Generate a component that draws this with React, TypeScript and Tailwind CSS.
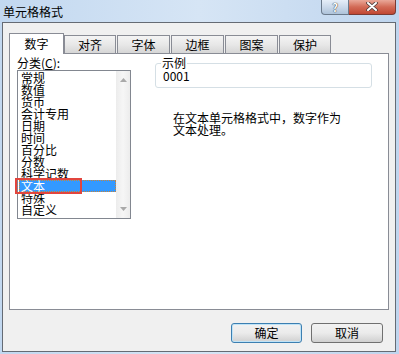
export default function App() {
  const items = ["常规", "数值", "货币", "会计专用", "日期", "时间", "百分比", "分数", "科学记数", "文本", "特殊", "自定义"];
  const tabs: { label: string; w: string }[] = [
    { label: "对齐", w: "w-[52px]" },
    { label: "字体", w: "w-[53px]" },
    { label: "边框", w: "w-[53px]" },
    { label: "图案", w: "w-[53px]" },
    { label: "保护", w: "w-[52px]" },
  ];
  return (
    <div className="w-[399px] h-[354px] flex flex-col bg-gradient-to-r from-[#c2d8f0] via-[#d6e5f5] to-[#bfd5ee] text-[12px] leading-[12px] text-black font-['Noto_Sans_CJK_SC',sans-serif]">
      {/* Title bar */}
      <div className="h-[22px] flex justify-between">
        <span className="pl-[3px] pt-[6px]">单元格格式</span>
        <div className="flex mr-[3px] h-[15px]">
          <div className="w-[28px] h-[15px] border border-t-0 border-[#6b7a8c] rounded-bl-[4px] bg-gradient-to-b from-[#e6eef8] via-[#cbd9ea] to-[#aec3da] flex items-center justify-center">
            <span className="text-[11px] leading-[11px] font-bold text-white [text-shadow:0_0_1px_#333,0_0_1px_#333]">?</span>
          </div>
          <div className="w-[47px] h-[15px] border border-t-0 border-l-0 border-[#7a3a33] rounded-br-[4px] bg-gradient-to-b from-[#e9a899] via-[#d26a56] to-[#c04632] flex items-start justify-center pt-[2px]">
            <svg width="12" height="9" viewBox="0 0 12 9">
              <path d="M2 1 L10 8 M10 1 L2 8" stroke="#4a3a3a" strokeWidth="3.6" strokeLinecap="round" />
              <path d="M2 1 L10 8 M10 1 L2 8" stroke="#ffffff" strokeWidth="2" strokeLinecap="round" />
            </svg>
          </div>
        </div>
      </div>

      {/* Client area */}
      <div className="ml-[2px] mr-[3px] h-[330px] border border-[#656b74] bg-[#f0f0f0] flex flex-col pt-[10px]">
        {/* Tabs */}
        <div className="relative z-10 -mb-[1px] h-[21px] flex items-end pl-[6px]">
          <div className="w-[55px] h-[21px] border border-b-0 border-[#898c95] bg-white flex items-center justify-center">
            数字
          </div>
          {tabs.map((t, i) => (
            <div
              key={t.label}
              className={`${t.w} h-[18px] mb-[1px] ${i === 0 ? "" : "ml-[1px]"} border border-b-0 border-[#898c95] bg-gradient-to-b from-[#f4f4f4] via-[#e8e8e8] to-[#d6d6d6] flex items-center justify-center pt-[1px]`}
            >
              {t.label}
            </div>
          ))}
        </div>

        {/* Panel */}
        <div className="ml-[6px] w-[380px] h-[257px] border border-[#898c95] bg-white flex pl-[7px] pt-[3px]">
          {/* Left column */}
          <div className="w-[114px] flex flex-col">
            <div className="h-[12px] whitespace-nowrap">
              分类(<span className="underline">C</span>):
            </div>
            <div className="mt-[1px] h-[149px] border border-[#828790] flex">
              <div className="w-[98px] pt-[1px] flex flex-col">
                {items.map((it) =>
                  it === "文本" ? (
                    <div
                      key={it}
                      className="relative ml-[1px] w-[97px] h-[12px] pl-[1px] bg-[#3399ff] text-white border border-dotted border-[#c8843a] leading-[10px]"
                    >
                      {it}
                      <div className="absolute left-[-5px] top-[-3px] w-[67px] h-[16px] border-[2px] border-[#e2453d]" />
                    </div>
                  ) : (
                    <div key={it} className="ml-[1px] w-[97px] h-[12px] pl-[2px] whitespace-nowrap">
                      {it}
                    </div>
                  )
                )}
              </div>
              <div className="w-[14px] bg-gradient-to-r from-[#ececec] via-[#f6f6f6] to-[#ececec] flex flex-col justify-between items-center pt-[7px] pb-[7px]">
                <svg width="7" height="4" viewBox="0 0 7 4">
                  <path d="M3.5 0 L7 4 L0 4 Z" fill="#a9a9a9" />
                </svg>
                <svg width="7" height="4" viewBox="0 0 7 4">
                  <path d="M0 0 L7 0 L3.5 4 Z" fill="#a9a9a9" />
                </svg>
              </div>
            </div>
          </div>

          {/* Right column */}
          <div className="ml-[24px] w-[217px] flex flex-col">
            <div className="relative mt-[6px] h-[25px] border border-[#d5dfe5] rounded-[3px] pl-[7px] pt-[6px]">
              <span className="absolute left-[5px] top-[-7px] bg-white px-[1px]">示例</span>
              0001
            </div>
            <div className="mt-[24px] ml-[18px] flex flex-col">
              <span className="h-[12px] whitespace-nowrap">在文本单元格格式中，数字作为</span>
              <span className="h-[12px] whitespace-nowrap">文本处理。</span>
            </div>
          </div>
        </div>

        {/* Buttons */}
        <div className="mt-[13px] flex justify-end gap-[9px] pr-[12px]">
          <div className="w-[71px] h-[20px] border border-[#3c7fb1] rounded-[3px] bg-gradient-to-b from-[#f2f2f2] via-[#ebebeb] to-[#d0d0d0] flex items-center justify-center shadow-[inset_0_0_0_1px_#bfe3f7]">
            确定
          </div>
          <div className="w-[72px] h-[20px] border border-[#707070] rounded-[3px] bg-gradient-to-b from-[#f2f2f2] via-[#ebebeb] to-[#d0d0d0] flex items-center justify-center">
            取消
          </div>
        </div>
      </div>
    </div>
  );
}
